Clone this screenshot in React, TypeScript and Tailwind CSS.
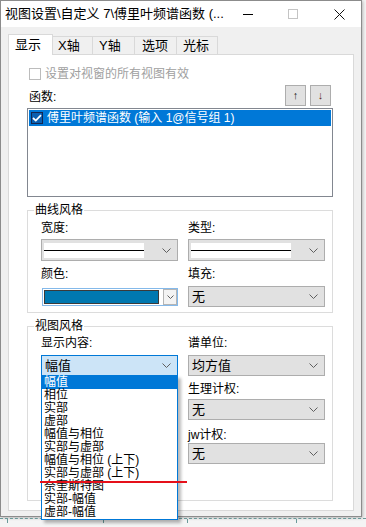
import React from "react";

const FONT = "font-['Liberation_Sans','Noto_Sans_CJK_SC',sans-serif]";

const Chevron = () => (
  <svg width="9" height="5" viewBox="0 0 9 5" className="shrink-0">
    <path d="M0.5 0.5 4.5 4.5 8.5 0.5" fill="none" stroke="#5f5f5f" strokeWidth="1" />
  </svg>
);

function Select({ children, focused }: { children?: React.ReactNode; focused?: boolean }) {
  return (
    <div
      className={`flex h-[21px] w-[137px] items-center justify-between border pl-[3px] pr-[6px] text-[13px] leading-[19px] ${
        focused ? "border-[#0078d7] bg-[#cce4f7]" : "border-[#adadad] bg-[#e1e1e1]"
      }`}
    >
      <div className="flex min-w-0 grow items-center">{children}</div>
      <Chevron />
    </div>
  );
}

function LineSelect() {
  return (
    <div className="flex h-[22px] w-[137px] items-center justify-between border border-[#adadad] bg-[#e1e1e1] pl-[2px] pr-[6px]">
      <div className="flex h-[15px] w-[100px] items-center bg-white">
        <div className="h-[1px] w-full bg-black" />
      </div>
      <Chevron />
    </div>
  );
}

function Label({ children, className = "" }: { children: React.ReactNode; className?: string }) {
  return <div className={`h-[16px] text-[12px] leading-[16px] text-black ${className}`}>{children}</div>;
}

function Group({ title, className, children }: { title: string; className: string; children: React.ReactNode }) {
  return (
    <div className={`relative w-[306px] border border-[#dcdcdc] ${className}`}>
      <span className="absolute -top-[9px] left-[6px] bg-white px-[1px] text-[12px] leading-[16px] text-black">{title}</span>
      {children}
    </div>
  );
}

const tabs = [
  { label: "X轴", w: "w-[40px]", pl: "pl-[5px]" },
  { label: "Y轴", w: "w-[42px]", pl: "pl-[6px]" },
  { label: "选项", w: "w-[42px]", pl: "pl-[7px]" },
  { label: "光标", w: "w-[41px]", pl: "pl-[6px]" },
];

const options = [
  "幅值",
  "相位",
  "实部",
  "虚部",
  "幅值与相位",
  "实部与虚部",
  "幅值与相位 (上下)",
  "实部与虚部 (上下)",
  "奈奎斯特图",
  "实部-幅值",
  "虚部-幅值",
];

export default function App() {
  return (
    <div className={`relative h-[527px] w-[366px] overflow-hidden bg-[#f4f4f4] ${FONT}`}>
      {/* Window */}
      <div className="flex h-[517px] w-[362px] flex-col border border-[#8c8c8c] bg-[#f0f0f0] shadow-[1px_1px_3px_rgba(0,0,0,0.25)]">
        {/* Title bar */}
        <div className="flex h-[26px] shrink-0 items-center bg-white">
          <div className="shrink-0 whitespace-nowrap pl-[4px] text-[13px] leading-[20px] text-black">
            视图设置\自定义 7\傅里叶频谱函数 (...
          </div>
          <div className="grow" />
          <div className="flex h-full w-[46px] shrink-0 items-center justify-center">
            <div className="h-[1px] w-[10px] bg-black" />
          </div>
          <div className="flex h-full w-[44px] shrink-0 items-center justify-center">
            <div className="h-[10px] w-[10px] border border-[#c4c4c4]" />
          </div>
          <div className="flex h-full w-[46px] shrink-0 items-center justify-center pl-[2px]">
            <svg width="11" height="11" viewBox="0 0 11 11">
              <path d="M0.5 0.5 10.5 10.5M10.5 0.5 0.5 10.5" stroke="#111" strokeWidth="1" />
            </svg>
          </div>
        </div>

        {/* Body */}
        <div className="flex grow flex-col px-[7px] pt-[7px]">
          {/* Tabs */}
          <div className="flex h-[20px] items-end">
            <div className="relative z-10 -mb-px h-[21px] w-[45px] border border-b-0 border-[#d9d9d9] bg-white pl-[6px] text-[13px] leading-[19px] text-black">
              显示
            </div>
            {tabs.map((t) => (
              <div
                key={t.label}
                className={`h-[18px] ${t.w} ${t.pl} border border-b-0 border-l-0 border-[#d9d9d9] bg-[#f0f0f0] text-[13px] leading-[17px] text-black`}
              >
                {t.label}
              </div>
            ))}
          </div>

          {/* Tab panel */}
          <div className="flex h-[457px] w-[346px] flex-col border border-[#d9d9d9] bg-white pl-[18px]">
            {/* disabled checkbox */}
            <div className="mt-[11px] flex h-[16px] items-center">
              <div className="ml-[2px] h-[12px] w-[12px] border border-[#bcbcbc] bg-white" />
              <span className="ml-[4px] text-[12px] leading-[16px] text-[#a0a0a0]">设置对视窗的所有视图有效</span>
            </div>

            {/* function header + up/down */}
            <div className="mt-[3px] flex h-[21px] w-[306px] items-end justify-between">
              <Label className="ml-[2px] mb-[1px]">函数:</Label>
              <div className="mr-[2px] flex h-[21px] gap-[4px]">
                <div className="flex h-[21px] w-[21px] items-center justify-center border border-[#adadad] bg-[#e1e1e1] text-[11px] leading-none text-[#222]">
                  ↑
                </div>
                <div className="flex h-[21px] w-[21px] items-center justify-center border border-[#adadad] bg-[#e1e1e1] text-[11px] leading-none text-[#5a2a1a]">
                  ↓
                </div>
              </div>
            </div>

            {/* list box */}
            <div className="mt-[2px] h-[89px] w-[306px] border border-[#828790] bg-white p-[1px]">
              <div className="flex h-[16px] items-center bg-[#0078d7] pl-[2px]">
                <div className="flex h-[12px] w-[12px] items-center justify-center border border-[#142650] bg-[#0a5fb0]">
                  <svg width="10" height="8" viewBox="0 0 10 8">
                    <path d="M1 4 3.8 6.6 9 1.2" fill="none" stroke="white" strokeWidth="1.8" />
                  </svg>
                </div>
                <span className="ml-[4px] text-[12px] leading-[16px] text-white">傅里叶频谱函数 (输入 1@信号组 1)</span>
              </div>
            </div>

            {/* 曲线风格 */}
            <Group title="曲线风格" className="mt-[13px] h-[103px]">
              <div className="grid grid-cols-[137px_137px] gap-x-[10px] pl-[13px] pt-[9px]">
                <Label>宽度:</Label>
                <Label>类型:</Label>
                <div className="mt-[3px]">
                  <LineSelect />
                </div>
                <div className="mt-[3px]">
                  <LineSelect />
                </div>
                <Label className="mt-[5px]">颜色:</Label>
                <Label className="mt-[5px]">填充:</Label>
                <div className="mt-[4px] flex h-[21px] items-center">
                  <div className="ml-[1px] flex h-[18px] w-[136px] items-center border border-[#84b9ea] bg-white pl-[1px]">
                    <div className="h-[14px] w-[116px] border border-[#3a3a3a] bg-[#0078b0]" />
                    <div className="ml-[4px] flex h-[16px] w-[14px] items-center justify-center border border-[#b5b5b5] bg-[#f3f3f3]">
                      <svg width="7" height="4" viewBox="0 0 7 4">
                        <path d="M0.5 0.5 3.5 3.5 6.5 0.5" fill="none" stroke="#5f5f5f" />
                      </svg>
                    </div>
                  </div>
                </div>
                <div className="mt-[4px]">
                  <Select>无</Select>
                </div>
              </div>
            </Group>

            {/* 视图风格 */}
            <Group title="视图风格" className="mt-[13px] h-[175px]">
              <div className="grid grid-cols-[137px_137px] gap-x-[10px] pl-[13px] pt-[8px]">
                <Label>显示内容:</Label>
                <Label>谱单位:</Label>
                <div className="mt-[4px]">
                  <Select focused>幅值</Select>
                </div>
                <div className="mt-[4px]">
                  <Select>均方值</Select>
                </div>
                <div />
                <Label className="mt-[5px]">生理计权:</Label>
                <div />
                <div className="mt-[2px]">
                  <Select>无</Select>
                </div>
                <div />
                <Label className="mt-[7px]">jw计权:</Label>
                <div />
                <div>
                  <Select>无</Select>
                </div>
              </div>
            </Group>
          </div>
        </div>
      </div>

      {/* Desktop area below window */}
      <div className="relative mt-[1px] h-[6px] border-t border-dashed border-[#6a9a9a]">
        <div className="absolute left-[7px] top-0 h-[4px] w-px bg-[#6a9a9a]" />
        <div className="absolute left-[103px] top-0 h-[4px] w-px bg-[#6a9a9a]" />
        <div className="absolute left-[187px] top-0 h-[4px] w-px bg-[#6a9a9a]" />
        <div className="absolute left-[296px] top-0 h-[4px] w-px bg-[#6a9a9a]" />
      </div>

      {/* Open dropdown list */}
      <div className="absolute left-[41px] top-[375px] w-[137px] border border-[#0078d7] bg-white shadow-[3px_3px_3px_rgba(0,0,0,0.28)]">
        {options.map((o, i) => (
          <div
            key={o}
            className={`h-[13px] whitespace-nowrap pl-[2px] text-[12px] leading-[13px] ${
              i === 0 ? "bg-[#0078d7] text-white" : "text-black"
            }`}
          >
            {o}
          </div>
        ))}
      </div>

      {/* Red annotation line */}
      <div className="absolute left-[40px] top-[481px] h-[2px] w-[147px] bg-[#e5101a]" />
    </div>
  );
}
